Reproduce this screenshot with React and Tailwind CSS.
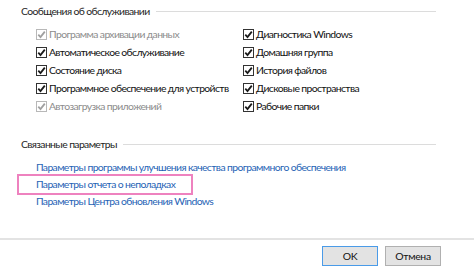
import React from "react";

function Check({ disabled }) {
  const c = disabled ? "#a0a0a0" : "#1a1a1a";
  return (
    <span
      className={`inline-flex items-center justify-center w-[11px] h-[11px] border bg-white shrink-0 ${disabled ? "border-[#b8b8b8]" : "border-[#333333]"}`}
    >
      <svg width="9" height="9" viewBox="0 0 9 9">
        <path d="M1.3 4.6 L3.5 7 L7.8 1.6" fill="none" stroke={c} strokeWidth="1.8" />
      </svg>
    </span>
  );
}

function Item({ label, disabled }) {
  return (
    <div className="flex items-center h-[18px] gap-[2px] whitespace-nowrap">
      <Check disabled={disabled} />
      <span className={disabled ? "text-[#8c8c8c]" : "text-[#111111]"}>{label}</span>
    </div>
  );
}

export default function App() {
  const left = [
    ["Программа архивации данных", true],
    ["Автоматическое обслуживание", false],
    ["Состояние диска", false],
    ["Программное обеспечение для устройств", false],
    ["Автозагрузка приложений", true],
  ];
  const right = [
    ["Диагностика Windows", false],
    ["Домашняя группа", false],
    ["История файлов", false],
    ["Дисковые пространства", false],
    ["Рабочие папки", false],
  ];
  return (
    <div
      className="w-[474px] h-[271px] bg-white relative overflow-hidden text-[10.4px] tracking-[-0.62px] leading-none"
      style={{ fontFamily: 'Lato, "Noto Sans", sans-serif' }}
    >
      <div className="flex items-center pl-[21px] pr-[38px] pt-[4px] h-[19px] text-[#1e1e1e] whitespace-nowrap">
        <span>Сообщения об обслуживании</span>
        <div className="flex-1 h-px bg-[#dcdcdc] ml-[6px]" />
      </div>
      <div className="flex pl-[36px] pt-[6px]">
        <div className="w-[207px] flex flex-col">
          {left.map(([l, d]) => (
            <Item key={l} label={l} disabled={d} />
          ))}
        </div>
        <div className="flex flex-col">
          {right.map(([l, d]) => (
            <Item key={l} label={l} disabled={d} />
          ))}
        </div>
      </div>
      <div className="flex items-center pl-[21px] pr-[38px] mt-[20px] h-[18px] text-[#1e1e1e] whitespace-nowrap">
        <span>Связанные параметры</span>
        <div className="flex-1 h-px bg-[#dcdcdc] ml-[6px]" />
      </div>
      <div className="flex flex-col pl-[36px] pt-[6px] text-[#1f63b5] whitespace-nowrap">
        <div className="h-[17px] flex items-center">Параметры программы улучшения качества программного обеспечения</div>
        <div className="h-[17px] flex items-center">Параметры отчета о неполадках</div>
        <div className="h-[17px] flex items-center">Параметры Центра обновления Windows</div>
      </div>
      <div className="absolute left-[17px] top-[174px] w-[176px] h-[21px] border-2 border-[#ee82bf]" />
      <div className="absolute left-0 right-0 top-[238px] bottom-0 flex flex-col">
        <div className="h-[2px] bg-[#e3e3e3]" />
        <div className="flex justify-end gap-[7px] pr-[33px] pt-[6px]">
          <button className="w-[56px] h-[20px] bg-[#e3e3e3] border border-[#4a9be8] text-[#111] text-[10.4px] tracking-[-0.3px]" style={{ fontFamily: 'Lato, sans-serif' }}>OK</button>
          <button className="w-[56px] h-[20px] bg-[#e3e3e3] border border-[#b0b0b0] text-[#111] text-[10.4px] tracking-[-0.3px]" style={{ fontFamily: 'Lato, sans-serif' }}>Отмена</button>
        </div>
      </div>
    </div>
  );
}
